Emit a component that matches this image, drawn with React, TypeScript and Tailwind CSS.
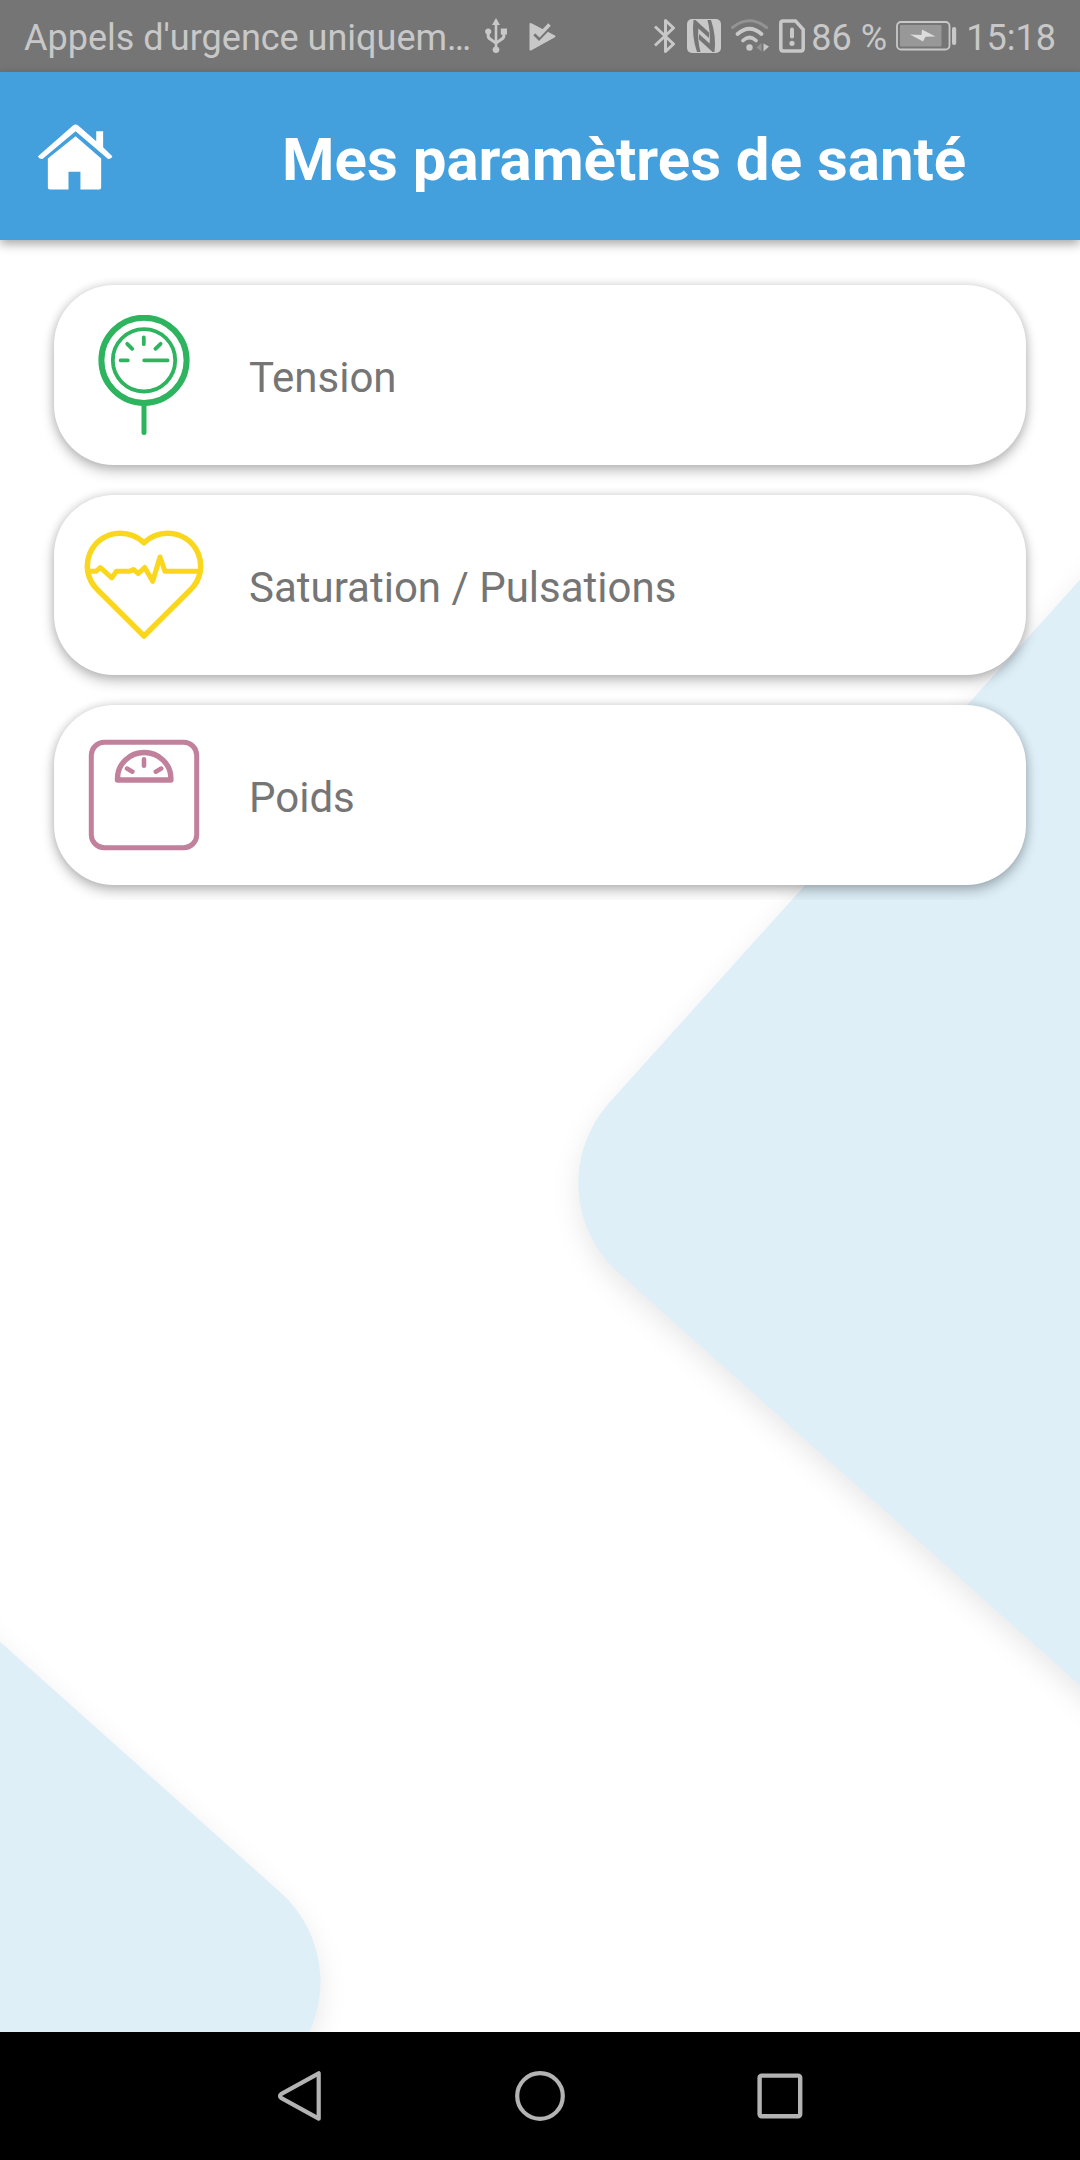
import React from 'react';

const TensionIcon: React.FC = () => (
  <svg width="120" height="120" viewBox="0 0 120 120" fill="none" stroke="#2eb35f" strokeLinecap="round">
    <circle cx="60" cy="45.3" r="42.600" strokeWidth="6" />
    <circle cx="60" cy="45.3" r="31.200" strokeWidth="3.800" />
    <path d="M60 91V117.500" strokeWidth="5" />
    <path d="M59.800 22.300V29.200M43.200 28.800L48.200 33.800M76.600 28.800L71.400 33.800M36.600 45.300H43.800M60.200 45.300H83.600" strokeWidth="3.800" />
  </svg>
);

const HeartIcon: React.FC = () => (
  <svg width="120" height="120" viewBox="0 0 120 120" fill="none" stroke="#fad61d" strokeWidth="5.500" strokeLinejoin="round">
    <path d="M60 17.800C53.500 11.600 45 8.300 36 8.300A32.700 32.700 0 0 0 12.900 64.100L60 111L107.100 64.100A32.700 32.700 0 0 0 84 8.300C75 8.300 66.500 11.600 60 17.800Z" />
    <path
      d="M4 46.300H12L16.300 42.500L27.800 52.800L32.300 46.300H45.300L49.500 44.500L54.300 48.500L60.700 42.500L68.700 56.300L76 32L81 46.300H116"
      strokeWidth="5"
    />
  </svg>
);

const ScaleIcon: React.FC = () => (
  <svg width="120" height="120" viewBox="0 0 120 120" fill="none" stroke="#c1819c" strokeWidth="5">
    <rect x="7.300" y="7.300" width="105.400" height="105.400" rx="13" />
    <path d="M33.500 45V43.500A26.700 26 0 0 1 86.900 43.500V45Z" strokeWidth="5.400" strokeLinejoin="round" />
    <path d="M60 24.300V30.700M43 33.600L48.400 36.700M77.200 33.600L71.800 36.700" strokeWidth="4.600" strokeLinecap="round" />
  </svg>
);

const HomeIcon: React.FC = () => (
  <svg width="75" height="66" viewBox="0 0 76 66" fill="#fff">
    <path d="M38.100 0Q39.500 0 41 1.300L59 17V7H66V23L75.300 32.200Q75 34.500 71 35L38.100 7L4.500 35Q0.500 34.600 0 32.200L35.200 1.300Q36.700 0 38.100 0Z" />
    <path d="M38.100 12L64 34.500V64Q64 66 62 66H43V48H30.900V66H12Q10 66 10 64V34.500Z" />
  </svg>
);

const UsbIcon: React.FC = () => (
  <svg width="22" height="36" viewBox="0 0 22 36" fill="#c8c8c8">
    <path d="M11 0L15 7H12.300V22.500L16.600 19.300Q17.300 18.700 17.300 17.500V16.500H15.800V10.500H22V16.500H20.300V18.500Q20.300 20.300 18.800 21.400L12.300 26V28.500A3.400 3.400 0 1 1 9.700 28.500V26L3.200 21.400Q1.700 20.300 1.700 18.500V16.300A3.100 3.100 0 1 1 4.700 16.300V17.500Q4.700 18.700 5.400 19.300L9.700 22.500V7H7Z" />
  </svg>
);

const PlayCheckIcon: React.FC = () => (
  <svg width="28" height="30" viewBox="0 0 28 30" fill="none">
    <path d="M1.500 3L25.500 15.300L1.500 28.500Z" fill="#c8c8c8" stroke="#c8c8c8" strokeWidth="2" strokeLinejoin="round" />
    <path d="M5.300 13.300L10 18L23.500 4" stroke="#757575" strokeWidth="2.800" />
    <path d="M7.500 10.800L10.700 14L20.500 3.500" stroke="#c8c8c8" strokeWidth="3.600" />
  </svg>
);

const BluetoothIcon: React.FC = () => (
  <svg width="22" height="36" viewBox="0 0 22 36" fill="none" stroke="#c8c8c8" strokeWidth="3" strokeLinejoin="round">
    <path d="M1 8.500L19.500 26L11.500 33.500V2.500L19.500 10L1 27.500" />
  </svg>
);

const NfcIcon: React.FC = () => (
  <svg width="34" height="34" viewBox="0 0 34 34">
    <rect width="34" height="34" rx="5" fill="#c8c8c8" />
    <g fill="#757575">
      <path d="M6.500 1H8.500L22 13.500V19L11.300 9.500Q10.500 22 13.500 33H10Q4.500 17 6.500 1Z" />
      <path d="M27.500 33H25.500L12 20.500V15L22.700 24.500Q23.500 12 20.500 1H24Q29.500 17 27.500 33Z" />
    </g>
  </svg>
);

const WifiIcon: React.FC = () => (
  <svg width="40" height="34" viewBox="0 0 40 34" fill="none" strokeLinecap="round">
    <path d="M2.500 8.500Q19.500 -5 36.500 8.500" stroke="#939393" strokeWidth="3" />
    <path d="M7.500 15Q19.500 4.500 31.500 15" stroke="#c8c8c8" strokeWidth="3.700" />
    <path d="M13 21.500Q19.500 15.500 26 21.500" stroke="#c8c8c8" strokeWidth="3.700" />
    <circle cx="19.500" cy="28.500" r="3.200" fill="#c8c8c8" />
    <path d="M33.500 24.500V32.500L39 27.500Z" fill="#c8c8c8" />
    <path d="M31.500 24V32.500L26.500 28.500Z" fill="#939393" />
  </svg>
);

const SimIcon: React.FC = () => (
  <svg width="26" height="34" viewBox="0 0 26 34" fill="none" stroke="#c8c8c8" strokeWidth="3.500">
    <path d="M4 1.900H16.500L24.200 10.500V29.500Q24.200 32 21.700 32H4.300Q1.800 32 1.800 29.500V4.300Q1.800 1.900 4 1.900Z" />
    <path d="M13 10.500V17.500" strokeWidth="4" strokeLinecap="round" />
    <circle cx="13" cy="24.300" r="2.600" fill="#c8c8c8" stroke="none" />
  </svg>
);

const BatteryIcon: React.FC = () => (
  <svg width="61" height="30" viewBox="0 0 61 30">
    <rect x="1" y="1" width="52.500" height="27.500" rx="4" fill="none" stroke="#c8c8c8" strokeWidth="1.800" />
    <rect x="4" y="4" width="41.500" height="21.500" rx="1" fill="#989898" />
    <path d="M14 13.500L25.500 14L26 8.500L39.500 15.500L29.500 15.800L27 20.500Z" fill="#dcdcdc" />
    <rect x="56" y="6" width="4.200" height="18" rx="2" fill="#c8c8c8" />
  </svg>
);

// Soft rounded diamonds behind the list
const Background: React.FC = () => (
  <svg className="absolute inset-0" width="1080" height="1792" viewBox="0 240 1080 1792">
    <g fill="#deeff8" className="[filter:drop-shadow(0_10px_13px_rgba(0,0,0,0.09))]">
      <path d="M1140 513L609 1103A120 120 0 0 0 620 1274L1140 1739Z" />
      <path d="M-60 1588L280 1892A120 120 0 0 1 294 2057L220 2140H-60Z" />
    </g>
  </svg>
);

const items = [
  { label: 'Tension', icon: <TensionIcon /> },
  { label: 'Saturation / Pulsations', icon: <HeartIcon /> },
  { label: 'Poids', icon: <ScaleIcon /> },
];

export const App: React.FC = () => {
  return (
    <div className="w-[1080px] h-[2160px] flex flex-col bg-white overflow-hidden font-[Roboto,sans-serif]">
      {/* Status bar */}
      <div className="h-[72px] shrink-0 bg-[#757575] text-[#c8c8c8] text-[36px] leading-none flex items-center pl-6 pr-6">
        <span className="w-[446px] whitespace-nowrap pt-[3px]">Appels d'urgence uniquem…</span>
        <div className="flex items-center ml-[15px] gap-[22px]">
          <UsbIcon />
          <PlayCheckIcon />
        </div>
        <div className="flex items-center ml-auto">
          <BluetoothIcon />
          <div className="ml-[11px]"><NfcIcon /></div>
          <div className="ml-[9px]"><WifiIcon /></div>
          <div className="ml-[9px]"><SimIcon /></div>
          <span className="w-[85px] ml-[6px] whitespace-nowrap pt-[3px]">86 %</span>
          <BatteryIcon />
          <span className="ml-[9px] pt-[3px]">15:18</span>
        </div>
      </div>

      {/* Header */}
      <header className="relative z-10 h-[168px] shrink-0 bg-[#43a0dd] flex items-center pl-[38px] shadow-[0_4px_10px_rgba(0,0,0,0.35)]">
        <div className="pt-[2px]"><HomeIcon /></div>
        <h1 className="ml-[169px] pt-[8px] text-white text-[60px] leading-none font-bold whitespace-nowrap">
          Mes paramètres de santé
        </h1>
      </header>

      {/* Content */}
      <main className="relative flex-1 overflow-hidden">
        <Background />
        <div className="relative h-[660px] overflow-hidden pt-[45px] px-[54px] flex flex-col gap-[30px]">
          {items.map((item) => (
            <div
              key={item.label}
              className="h-[180px] shrink-0 rounded-[60px] bg-white pl-[30px] flex items-center shadow-[0_6px_13px_rgba(0,0,0,0.24),0_0_10px_rgba(0,0,0,0.15)]"
            >
              {item.icon}
              <span className="ml-[45px] pt-[5px] text-[42px] leading-none text-[#757575]">{item.label}</span>
            </div>
          ))}
        </div>
      </main>

      {/* Navigation bar */}
      <nav className="h-32 shrink-0 bg-black flex items-center justify-center gap-[180px]">
        <svg width="60" height="60" viewBox="0 0 60 60" fill="none" stroke="#b3b3b3" strokeWidth="4.200" strokeLinejoin="round">
          <path d="M48.700 7.300V52.700L11 31.800Q9 30 11 28.200Z" />
        </svg>
        <svg width="60" height="60" viewBox="0 0 60 60" fill="none" stroke="#b3b3b3" strokeWidth="4.200">
          <circle cx="30" cy="30" r="22.800" />
        </svg>
        <svg width="60" height="60" viewBox="0 0 60 60" fill="none" stroke="#b3b3b3" strokeWidth="4.400">
          <rect x="9.600" y="9.600" width="40.600" height="40.600" rx="2" />
        </svg>
      </nav>
    </div>
  );
};

export default App;
